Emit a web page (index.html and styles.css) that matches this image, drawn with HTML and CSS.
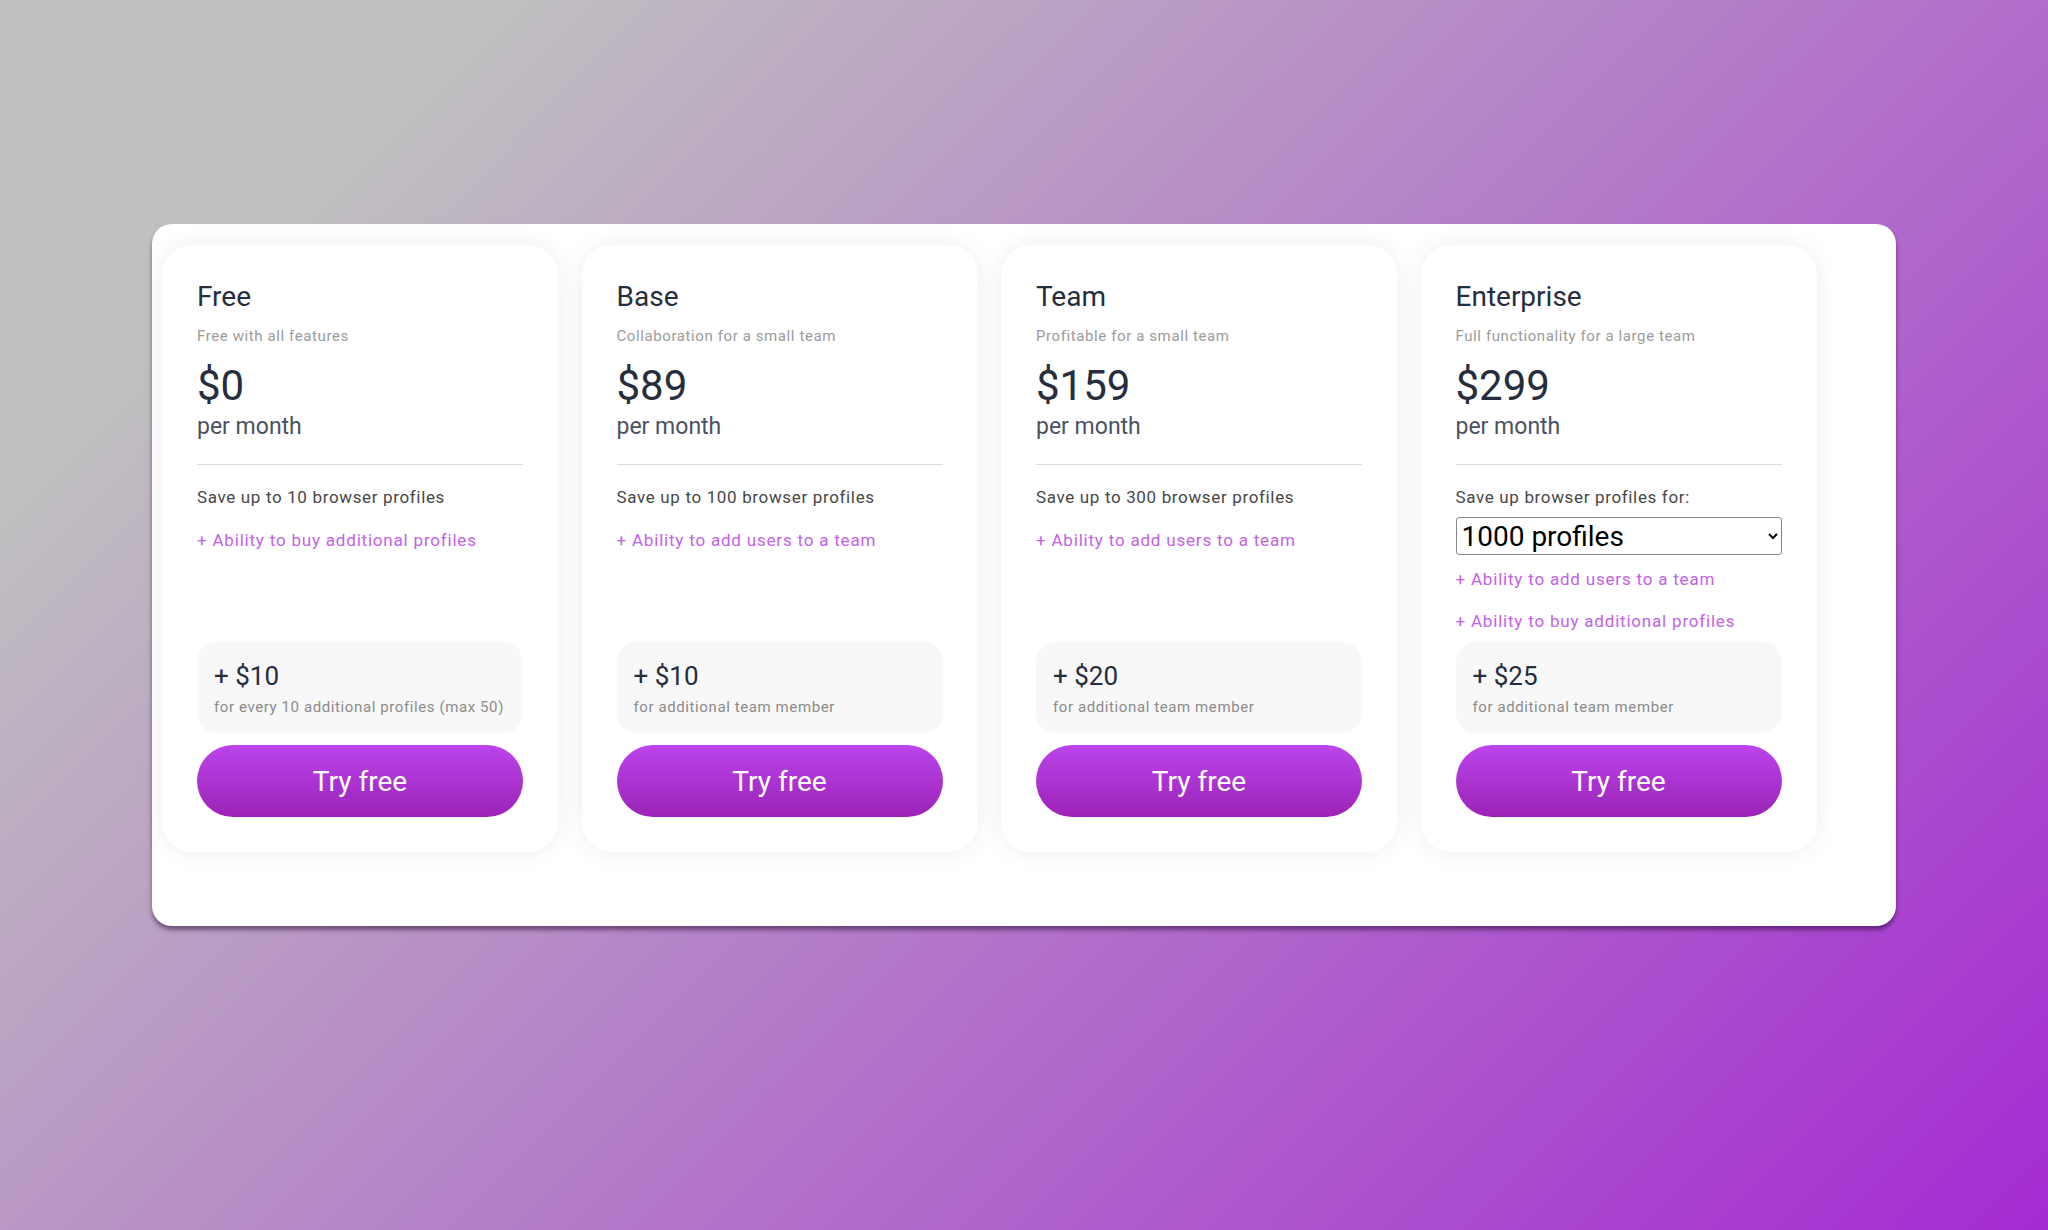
FILE: index.html
```html
<!DOCTYPE html>
<html lang="en">
<head>
<meta charset="utf-8">
<title>Pricing</title>
<link rel="stylesheet" href="styles.css">
</head>
<body>
<main class="panel">
  <section class="plans">
    <article class="plan">
      <h2 class="plan-name">Free</h2>
      <p class="plan-desc">Free with all features</p>
      <div class="price">$0</div>
      <div class="period">per month</div>
      <hr class="divider">
      <p class="feature">Save up to 10 browser profiles</p>
      <p class="feature extra">+ Ability to buy additional profiles</p>
      <div class="addon">
        <div class="addon-price">+ $10</div>
        <div class="addon-note">for every 10 additional profiles (max 50)</div>
      </div>
      <button class="cta">Try free</button>
    </article>
    <article class="plan">
      <h2 class="plan-name">Base</h2>
      <p class="plan-desc">Collaboration for a small team</p>
      <div class="price">$89</div>
      <div class="period">per month</div>
      <hr class="divider">
      <p class="feature">Save up to 100 browser profiles</p>
      <p class="feature extra">+ Ability to add users to a team</p>
      <div class="addon">
        <div class="addon-price">+ $10</div>
        <div class="addon-note">for additional team member</div>
      </div>
      <button class="cta">Try free</button>
    </article>
    <article class="plan">
      <h2 class="plan-name">Team</h2>
      <p class="plan-desc">Profitable for a small team</p>
      <div class="price">$159</div>
      <div class="period">per month</div>
      <hr class="divider">
      <p class="feature">Save up to 300 browser profiles</p>
      <p class="feature extra">+ Ability to add users to a team</p>
      <div class="addon">
        <div class="addon-price">+ $20</div>
        <div class="addon-note">for additional team member</div>
      </div>
      <button class="cta">Try free</button>
    </article>
    <article class="plan">
      <h2 class="plan-name">Enterprise</h2>
      <p class="plan-desc">Full functionality for a large team</p>
      <div class="price">$299</div>
      <div class="period">per month</div>
      <hr class="divider">
      <p class="feature">Save up browser profiles for:</p>
      <select class="profiles">
        <option>1000 profiles</option>
        <option>2000 profiles</option>
        <option>5000 profiles</option>
      </select>
      <p class="feature extra after-select">+ Ability to add users to a team</p>
      <p class="feature extra second">+ Ability to buy additional profiles</p>
      <div class="addon">
        <div class="addon-price">+ $25</div>
        <div class="addon-note">for additional team member</div>
      </div>
      <button class="cta">Try free</button>
    </article>
  </section>
</main>
</body>
</html>
```

FILE: styles.css
```css
html, body {
  margin: 0;
  padding: 0;
}
body {
  width: 2048px;
  height: 1230px;
  overflow: hidden;
  font-family: Roboto, "Liberation Sans", Arial, sans-serif;
  background: linear-gradient(135deg, #c0c0c0 15%, #a52bd2 100%);
}
.panel {
  width: 1744px;
  margin: 224px auto 0;
  box-sizing: border-box;
  padding: 21px 0 74px 10px;
  background: #ffffff;
  border-radius: 20px;
  box-shadow: 0 4px 4px rgba(40, 10, 50, 0.5);
}
.plans {
  display: grid;
  grid-template-columns: repeat(4, 396px);
  column-gap: 23.5px;
}
.plan {
  display: flex;
  flex-direction: column;
  padding: 35px;
  background: #fff;
  border-radius: 30px;
  box-shadow: 0 0 24px rgba(0, 0, 0, 0.07);
}
.plan-name {
  margin: 0;
  font-size: 28px;
  line-height: 34px;
  font-weight: 400;
  color: #262d3d;
}
.plan-desc {
  margin: 12px 0 0;
  font-size: 15px;
  line-height: 20px;
  letter-spacing: 0.6px;
  color: #9b9b9b;
}
.price {
  margin-top: 15px;
  font-size: 42px;
  line-height: 50px;
  font-weight: 400;
  color: #262d3d;
}
.period {
  margin-top: 2px;
  font-size: 23px;
  line-height: 28px;
  color: #4a5262;
}
.divider {
  margin: 23px 0 0;
  border: 0;
  height: 1px;
  background: #dcdcdc;
}
.feature {
  margin: 20px 0 0;
  font-size: 17px;
  line-height: 24px;
  letter-spacing: 0.65px;
  color: #474747;
}
.feature.extra {
  margin-top: 19px;
  color: #c262e6;
  letter-spacing: 0.8px;
}
.feature.after-select {
  margin-top: 12px;
}
.feature.second {
  margin-top: 18px;
}
.profiles {
  margin-top: 8px;
  width: 100%;
  height: 38px;
  padding: 0 1px;
  font-family: Roboto, "Liberation Sans", Arial, sans-serif;
  font-size: 28px;
  color: #000;
  background: #fff;
  border: 1px solid #858585;
  border-radius: 3px;
}
.addon {
  margin-top: auto;
  padding: 19px 17px 16px;
  background: #f8f8f8;
  border-radius: 20px;
}
.plan .feature.second + .addon {
  margin-top: 9px;
}
.addon-price {
  font-size: 26px;
  line-height: 30px;
  font-weight: 400;
  color: #262d3d;
}
.addon-note {
  margin-top: 6px;
  font-size: 15px;
  line-height: 20px;
  letter-spacing: 0.6px;
  color: #8b8b8b;
}
.cta {
  margin-top: 12px;
  height: 72px;
  width: 100%;
  border: 0;
  border-radius: 36px;
  background: linear-gradient(180deg, #bb45ec 0%, #9c22b6 100%);
  color: #fff;
  font-family: Roboto, "Liberation Sans", Arial, sans-serif;
  font-size: 28px;
  font-weight: 400;
  cursor: pointer;
}
```
